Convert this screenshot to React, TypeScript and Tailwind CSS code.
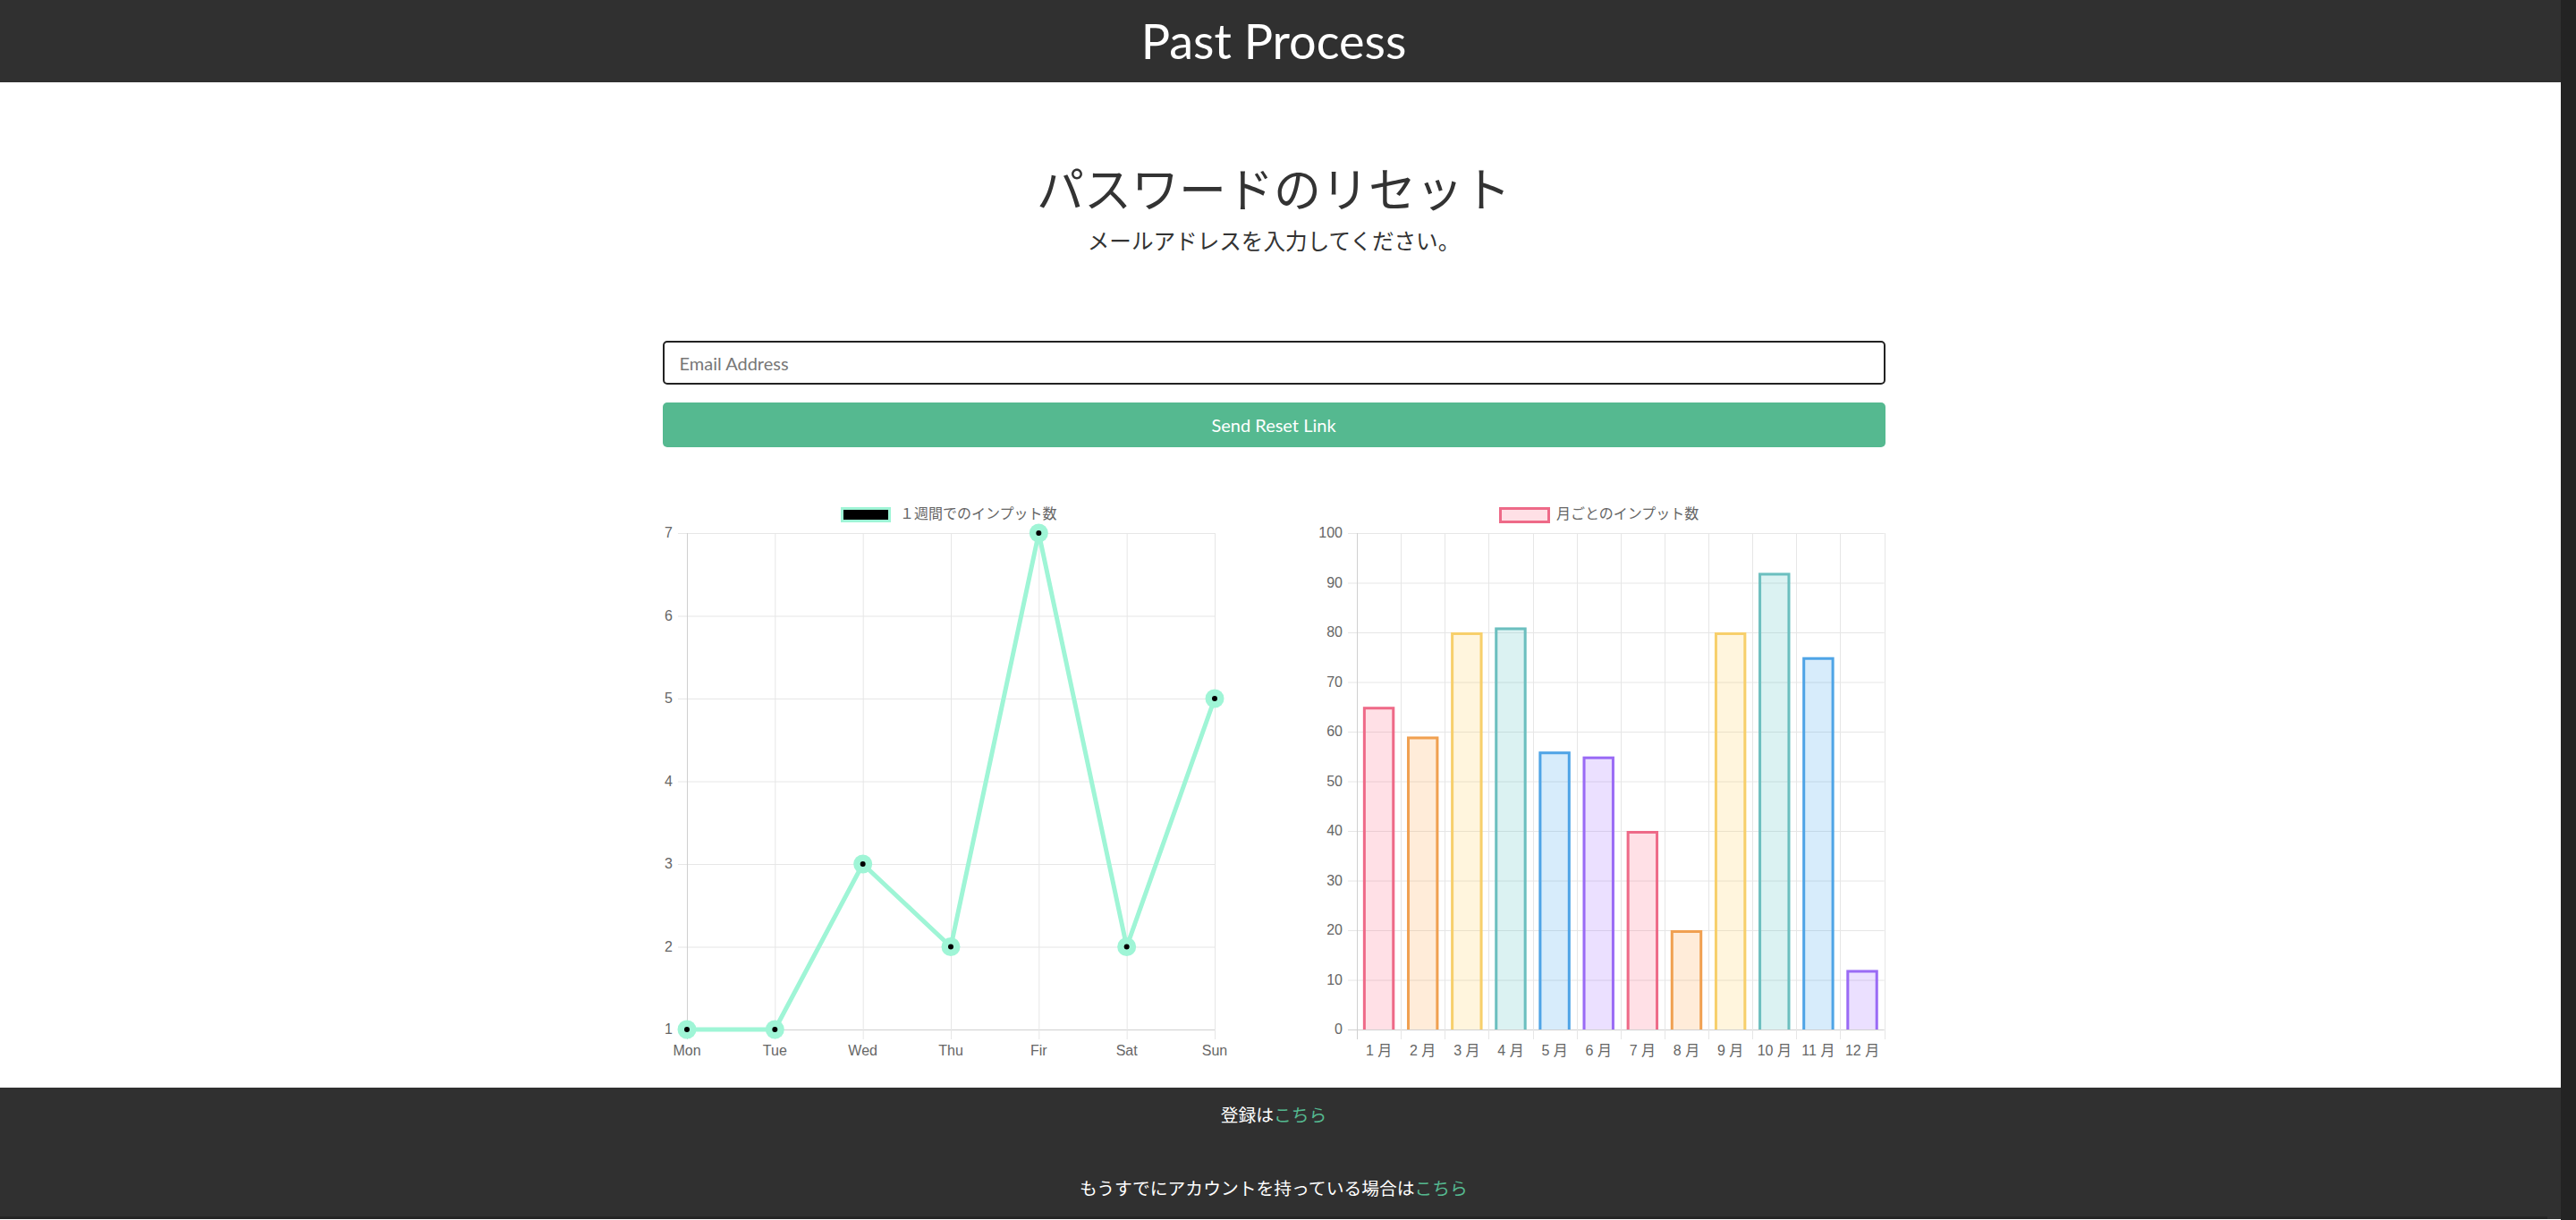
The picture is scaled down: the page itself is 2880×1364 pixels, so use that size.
import React from "react";

const days = ["Mon", "Tue", "Wed", "Thu", "Fir", "Sat", "Sun"];
const weekly = [1, 1, 3, 2, 7, 2, 5];
const monthly = [65, 59, 80, 81, 56, 55, 40, 20, 80, 92, 75, 12];

const palette = [
  { stroke: "#ee6a88", fill: "rgba(255,99,132,0.2)" },
  { stroke: "#f0a051", fill: "rgba(255,159,64,0.2)" },
  { stroke: "#f7cf6b", fill: "rgba(255,205,86,0.2)" },
  { stroke: "#6cbfbf", fill: "rgba(75,192,192,0.2)" },
  { stroke: "#4fa4e6", fill: "rgba(54,162,235,0.2)" },
  { stroke: "#9a6bf5", fill: "rgba(153,102,255,0.2)" },
];

const MINT = "#9ff5d6";
const GRID = "#e6e6e6";
const AXIS = "#d0d0d0";

function WeeklyChart() {
  const left = 27;
  const right = 617;
  const top = 37;
  const bottom = 592;
  const step = (right - left) / 6;
  const unit = (bottom - top) / 6;
  const pts = weekly.map((v, i) => [left + i * step, bottom - (v - 1) * unit]);

  return (
    <svg width={636} height={640} className="block font-['Liberation_Sans','Noto_Sans_CJK_JP',sans-serif]">
      {/* legend */}
      <rect x={200.5} y={9.5} width={53} height={14} fill="#000" stroke={MINT} strokeWidth={3} />
      <text x={265} y={17} fontSize={16} fill="#666" dominantBaseline="middle">
        １週間でのインプット数
      </text>

      {[7, 6, 5, 4, 3, 2, 1].map((v) => {
        const y = bottom - (v - 1) * unit;
        return (
          <g key={v}>
            <line x1={left - 10} x2={right} y1={y + 0.5} y2={y + 0.5} stroke={v === 1 ? AXIS : GRID} strokeWidth={1} />
            <text x={11} y={y + 1} fontSize={16} fill="#666" textAnchor="end" dominantBaseline="middle">
              {v}
            </text>
          </g>
        );
      })}

      {days.map((d, i) => {
        const x = left + i * step;
        return (
          <g key={d}>
            <line x1={x + 0.5} x2={x + 0.5} y1={top} y2={bottom + 11} stroke={i === 0 ? AXIS : GRID} strokeWidth={1} />
            <text x={x} y={617} fontSize={16} fill="#666" textAnchor="middle" dominantBaseline="middle">
              {d}
            </text>
          </g>
        );
      })}

      <polyline
        points={pts.map((p) => p.join(",")).join(" ")}
        fill="none"
        stroke={MINT}
        strokeWidth={5}
        strokeLinejoin="round"
      />
      {pts.map(([x, y], i) => (
        <g key={i}>
          <circle cx={x} cy={y} r={10.5} fill={MINT} />
          <circle cx={x} cy={y} r={3} fill="#000" />
        </g>
      ))}
    </svg>
  );
}

function MonthlyChart() {
  const left = 45;
  const right = 634.6;
  const top = 37;
  const bottom = 592;
  const cat = (right - left) / 12;
  const barW = cat * 0.72;
  const unit = (bottom - top) / 100;

  return (
    <svg width={636} height={640} className="block font-['Liberation_Sans','Noto_Sans_CJK_JP',sans-serif]">
      {/* legend */}
      <rect x={205.5} y={9.5} width={54} height={15} fill="rgba(255,99,132,0.2)" stroke="#ee6a88" strokeWidth={3} />
      <text x={268} y={17} fontSize={16} fill="#666" dominantBaseline="middle">
        月ごとのインプット数
      </text>

      {[100, 90, 80, 70, 60, 50, 40, 30, 20, 10, 0].map((v) => {
        const y = bottom - v * unit;
        return (
          <g key={v}>
            <line x1={left - 10} x2={right} y1={y + 0.5} y2={y + 0.5} stroke={v === 0 ? AXIS : GRID} strokeWidth={1} />
            <text x={29} y={y + 1} fontSize={16} fill="#666" textAnchor="end" dominantBaseline="middle">
              {v}
            </text>
          </g>
        );
      })}

      {Array.from({ length: 13 }).map((_, i) => {
        const x = Math.round(left + i * cat);
        return (
          <line key={i} x1={x + 0.5} x2={x + 0.5} y1={top} y2={bottom + 11} stroke={i === 0 ? AXIS : GRID} strokeWidth={1} />
        );
      })}

      {monthly.map((v, i) => {
        const c = palette[i % 6];
        const cx = left + (i + 0.5) * cat;
        const x0 = cx - barW / 2;
        const x1 = cx + barW / 2;
        const y = bottom - v * unit;
        return (
          <g key={i}>
            <rect x={x0} y={y} width={barW} height={bottom - y} fill={c.fill} />
            <path
              d={`M ${x0 + 1.5} ${bottom} V ${y + 1.5} H ${x1 - 1.5} V ${bottom}`}
              fill="none"
              stroke={c.stroke}
              strokeWidth={3}
            />
            <text x={cx} y={617} fontSize={16} fill="#666" textAnchor="middle" dominantBaseline="middle">
              {`${i + 1} 月`}
            </text>
          </g>
        );
      })}
    </svg>
  );
}

export default function App() {
  return (
    <div className="flex w-full min-h-[1364px] bg-[#232323]">
      <div className="flex-1 flex flex-col bg-white">
        <header className="h-[92px] bg-[#303030] flex items-center justify-center pr-[15px]">
          <h1 className="text-white text-[54px] leading-none font-['Lato',sans-serif]">Past Process</h1>
        </header>

        <main className="flex flex-col items-center pr-[15px] text-[#333] font-['Noto_Sans_CJK_JP',sans-serif]">
          <h2 className="mt-[86px] text-[53px] leading-[62px]">パスワードのリセット</h2>
          <p className="mt-[10px] text-[24.6px] leading-[36px]">メールアドレスを入力してください。</p>

          <form className="w-[1367px] mt-[95px] flex flex-col gap-[20px] font-['Lato',sans-serif]">
            <input
              type="email"
              placeholder="Email Address"
              className="h-[49px] w-full rounded-[5px] border-2 border-[#222] px-[17px] text-[20px] placeholder:text-[#777] outline-none"
            />
            <button
              type="button"
              className="h-[50px] w-full rounded-[5px] bg-[#55b990] text-white text-[20px]"
            >
              Send Reset Link
            </button>
          </form>

          <div className="w-[1367px] mt-[59px] grid grid-cols-2 gap-[95px]">
            <WeeklyChart />
            <MonthlyChart />
          </div>
        </main>

        <footer className="mt-[17px] h-[147px] bg-[#303030] flex flex-col items-center pr-[15px] text-white text-[19.8px] leading-[30px] font-['Noto_Sans_CJK_JP',sans-serif]">
          <p className="mt-[15px]">
            登録は<a className="text-[#55b990]">こちら</a>
          </p>
          <p className="mt-[52px]">
            もうすでにアカウントを持っている場合は<a className="text-[#55b990]">こちら</a>
          </p>
          <div className="mt-auto h-[3px] w-full bg-[#262626]" />
        </footer>
      </div>
      <div className="w-[17px] shrink-0 bg-[#232323]" />
    </div>
  );
}
